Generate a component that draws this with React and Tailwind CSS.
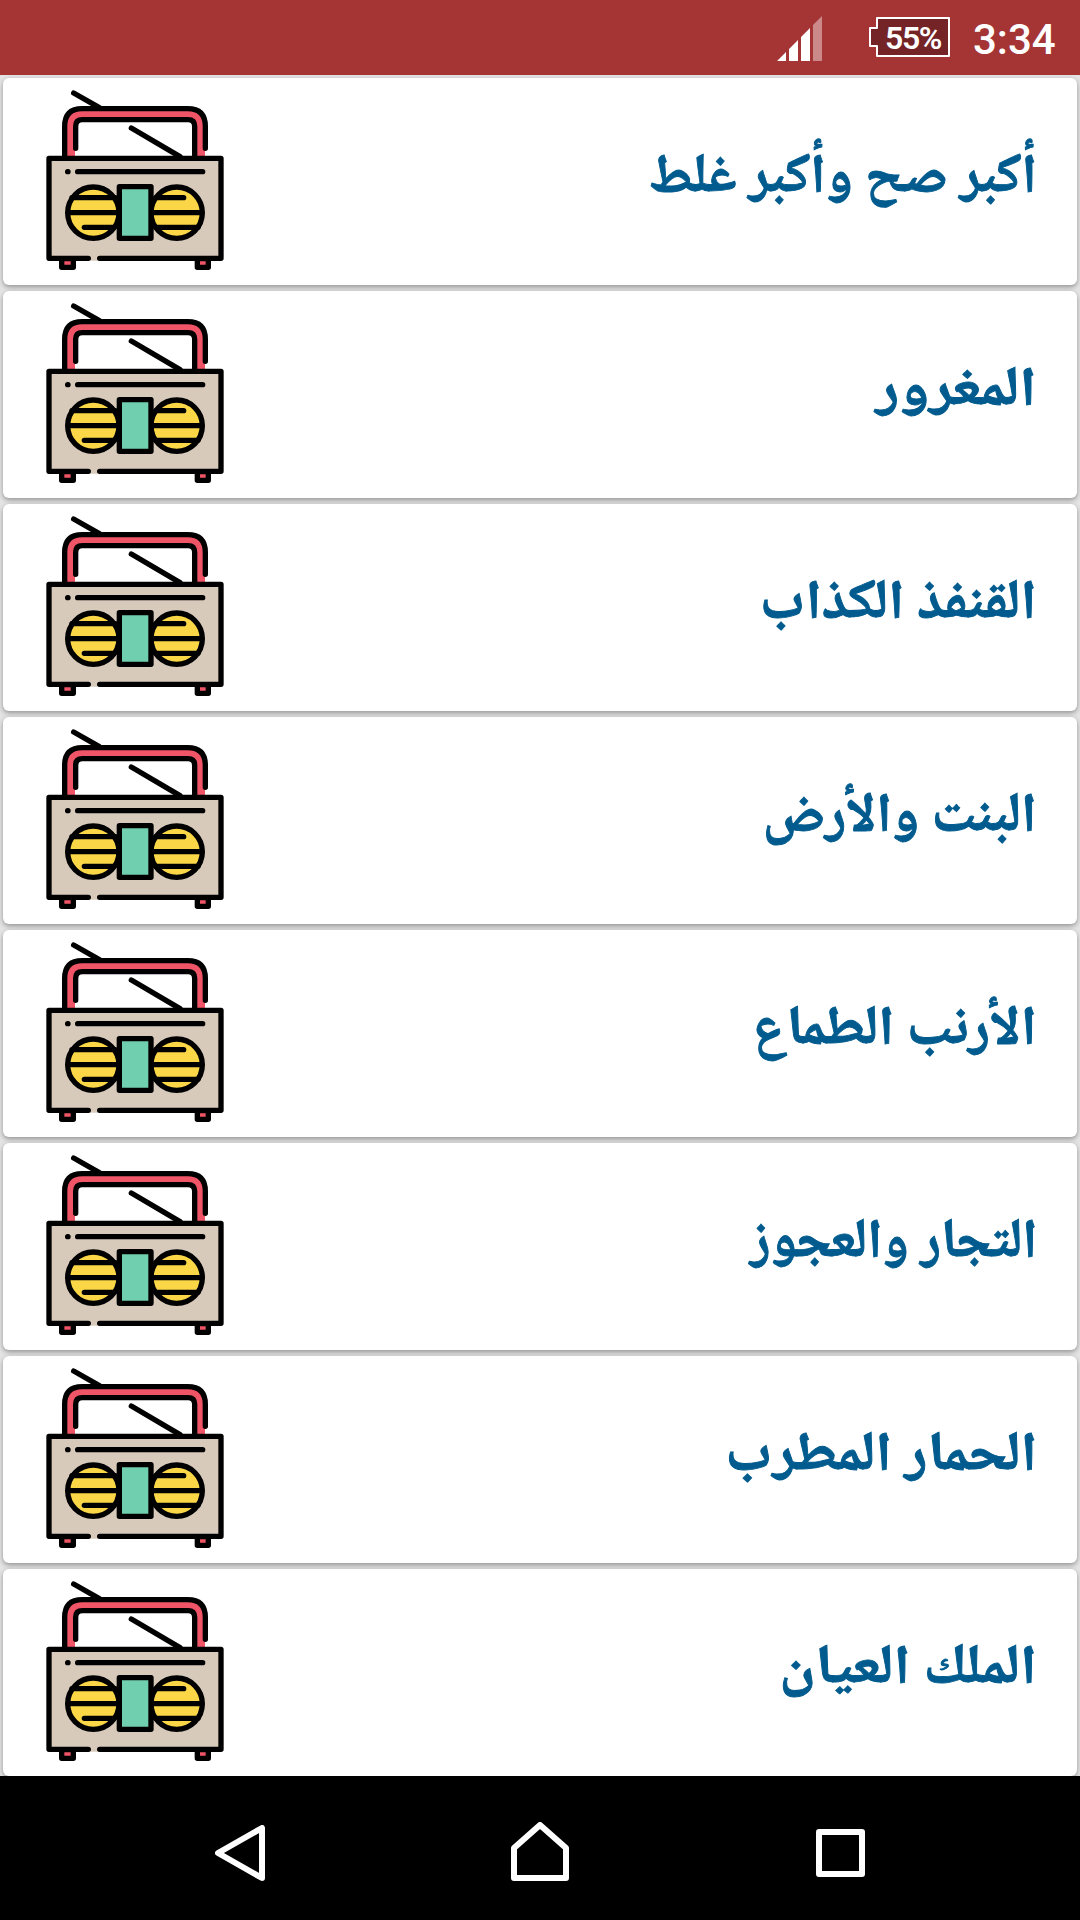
import React from 'react';

const STORIES = [
  { title: 'أكبر صح وأكبر غلط', stretch: 'scale-x-[0.992]' },
  { title: 'المغرور', stretch: 'scale-x-[1.11]' },
  { title: 'القنفذ الكذاب', stretch: 'scale-x-[1.035]' },
  { title: 'البنت والأرض', stretch: 'scale-x-[1.005]' },
  { title: 'الأرنب الطماع', stretch: 'scale-x-[1.028]' },
  { title: 'التجار والعجوز', stretch: 'scale-x-[0.972]' },
  { title: 'الحمار المطرب', stretch: 'scale-x-[1.075]' },
  { title: 'الملك العيان', stretch: 'scale-x-[1.083]' },
];

const RadioIcon = () => (
  <svg
    className="h-[183px] w-[180px] shrink-0"
    viewBox="45 39 540 549"
    fill="none"
    stroke="#000"
    strokeWidth="16"
    strokeLinecap="round"
    strokeLinejoin="round"
  >
    {/* antenna */}
    <path d="M131 54 208 98M304 159 450 245" />
    {/* handle */}
    <path d="M120 248V152Q120 117 157 117H473Q510 117 510 152V248" stroke="#f05567" strokeWidth="30" strokeLinecap="butt" />
    <path d="M104 246V154Q104 101 157 101H473Q526 101 526 154V220" />
    <path d="M137 220V154Q137 134 157 134H474Q494 134 494 154V246" />
    {/* feet */}
    <path d="M95 551H130V577H95ZM502 551H535V577H502Z" fill="#f05567" />
    {/* body */}
    <path d="M57 250H573V557H57Z" fill="#d8cabb" stroke="none" />
    <path d="M175 550H57V250H573V550H209" />
    <path d="M113 290H114M143 290H518" />
    {/* speakers */}
    <circle cx="190" cy="413" r="77" fill="#fbd748" />
    <circle cx="440" cy="413" r="77" fill="#fbd748" />
    <path d="M126 368H256M116 413H262M163 457H252M378 368H461M368 413H514M378 457H504" />
    <path d="M268 335H363V490H268Z" fill="#70cfae" />
  </svg>
);

const StoryCard = ({ title, stretch }) => (
  <div className="flex h-[207px] items-start justify-between rounded-[6px] bg-white pt-[10px] pr-[40px] pl-[42px] shadow-[0_2px_5px_rgba(0,0,0,0.36)]">
    <RadioIcon />
    <h3
      dir="rtl"
      className={`mt-[56px] origin-right text-[55px] leading-[72px] font-bold whitespace-nowrap text-[#015b8e] [-webkit-text-stroke:0.9px_#015b8e] ${stretch}`}
    >
      {title}
    </h3>
  </div>
);

const StatusBar = () => (
  <header className="flex h-[75px] items-start bg-[#a53435] pl-[777px] text-white">
    <svg className="mt-4 h-[45px] w-[45px]" viewBox="0 0 45 45" fill="#fff">
      <path d="M0 45 9 36V45ZM12 45V33L21 24V45ZM24 45V21L33 12V45Z" />
      <path d="M36 45V9L45 0V45Z" opacity=".42" />
    </svg>
    <div className="relative mt-[17px] ml-[47px] h-10 w-[81px]">
      <svg className="h-10 w-[81px]" viewBox="0 0 81 40" fill="#742326" stroke="#fff" strokeWidth="2" strokeLinejoin="round">
        <path d="M8 1H80V39H8V29H1V11H8Z" />
      </svg>
      <span className="absolute top-px left-[16px] font-['Roboto'] text-[32px] leading-10 font-semibold tracking-[-1.4px]">55%</span>
    </div>
    <span className="mt-[15px] ml-[23px] font-['Roboto'] text-[42px] leading-[50px] font-medium">3:34</span>
  </header>
);

const NavBar = () => (
  <nav className="flex h-36 items-start bg-black pl-[215px]">
    <svg className="mt-[49px] h-[56px] w-[50px]" viewBox="0 0 50 56" fill="none" stroke="#fff" strokeWidth="6" strokeLinejoin="round">
      <path d="M3 28 47 3V53Z" />
    </svg>
    <svg className="mt-[46px] ml-[246px] h-[59px] w-[58px]" viewBox="0 0 58 59" fill="none" stroke="#fff" strokeWidth="6" strokeLinejoin="round">
      <path d="M3 56V26L29 3 55 26V56Z" />
    </svg>
    <svg className="mt-[53px] ml-[247px] h-[48px] w-[49px]" viewBox="0 0 49 48" fill="none" stroke="#fff" strokeWidth="6" strokeLinejoin="round">
      <path d="M3 3H46V45H3Z" />
    </svg>
  </nav>
);

export default function App() {
  return (
    <div className="flex h-[1920px] w-[1080px] flex-col overflow-hidden bg-[#e4e4e4] font-['Noto_Naskh_Arabic','Noto_Sans_Arabic','DejaVu_Sans',sans-serif]">
      <StatusBar />
      <main className="flex h-[1701px] flex-col gap-[6px] overflow-hidden px-[3px] pt-[3px]">
        {STORIES.map((story) => (
          <StoryCard key={story.title} {...story} />
        ))}
      </main>
      <NavBar />
    </div>
  );
}
